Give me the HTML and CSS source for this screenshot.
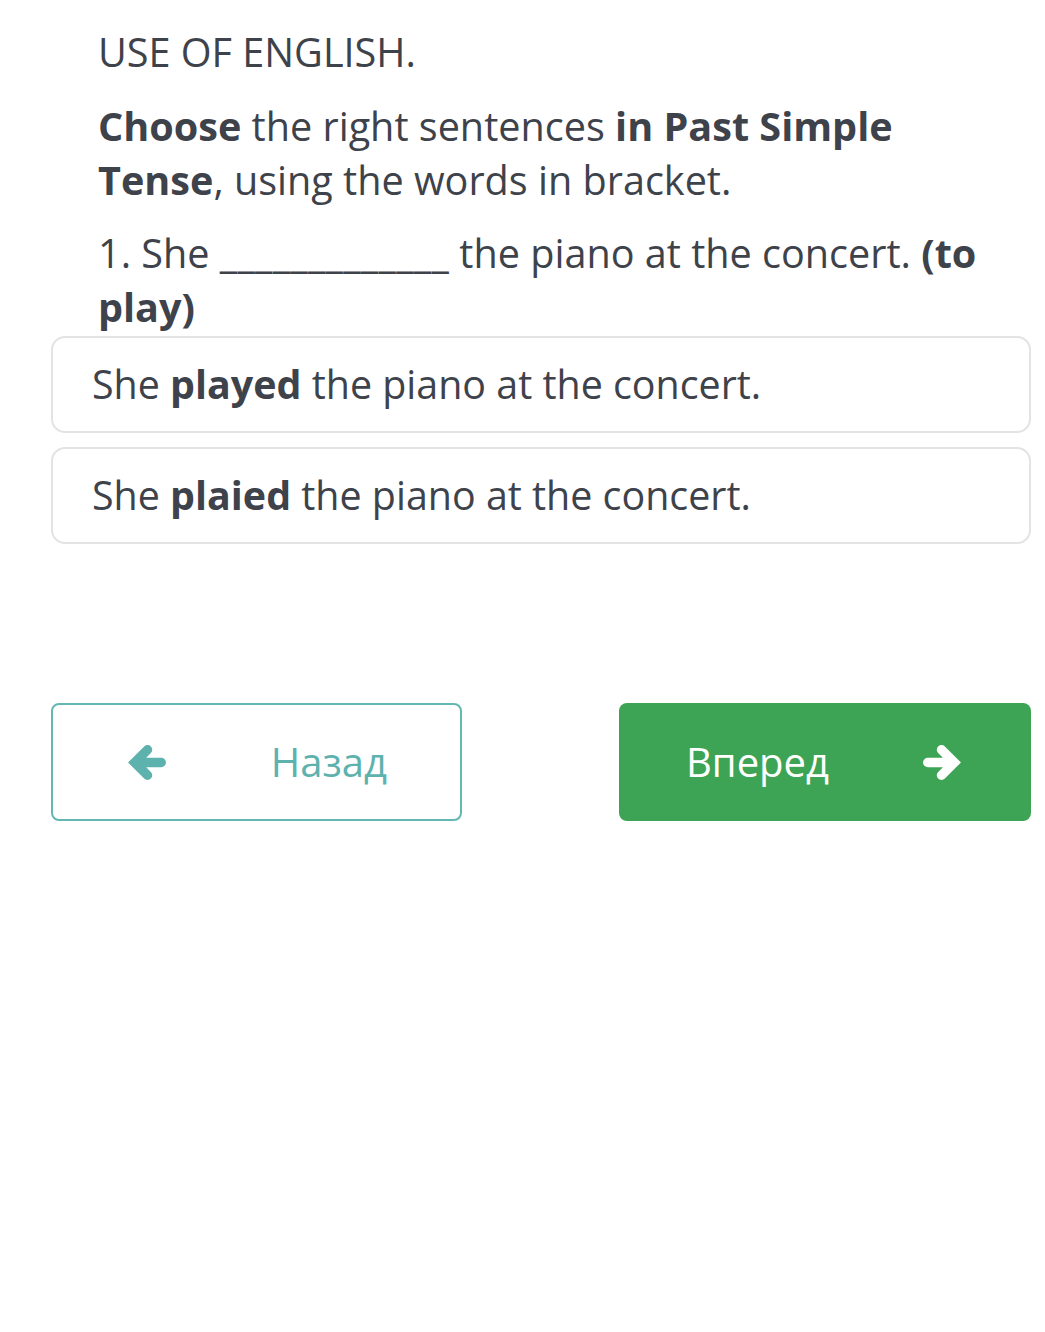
FILE: index.html
```html
<!DOCTYPE html>
<html lang="ru">
<head>
<meta charset="utf-8">
<link rel="stylesheet" href="styles.css">
</head>
<body>
<main class="page">
  <div class="text">
    <p class="title">USE OF ENGLISH.</p>
    <p class="task"><b>Choose</b> the right sentences <b>in Past Simple Tense</b>, using the words in bracket.</p>
    <p class="question">1. She <span class="blank">_____________</span> the piano at the concert. <b>(to play)</b></p>
  </div>
  <div class="options">
    <div class="option"><span>She <b>played</b> the piano at the concert.</span></div>
    <div class="option"><span>She <b>plaied</b> the piano at the concert.</span></div>
  </div>
  <div class="nav">
    <button class="btn btn-back">
      <svg class="arrow" viewBox="0 0 38 35" width="38" height="35"><path d="M33.25 17.5H7 M19.5 4.75L6.75 17.5 19.5 30.25" fill="none" stroke="currentColor" stroke-width="9.5" stroke-linecap="round" stroke-linejoin="miter"/></svg>
      <span>Назад</span>
    </button>
    <button class="btn btn-next">
      <span>Вперед</span>
      <svg class="arrow" viewBox="0 0 38 35" width="40" height="35"><path d="M4.75 17.5H31 M18.5 4.75L31.25 17.5 18.5 30.25" fill="none" stroke="currentColor" stroke-width="9.5" stroke-linecap="round" stroke-linejoin="miter"/></svg>
    </button>
  </div>
</main>
</body>
</html>
```
FILE: styles.css
```css
html, body {
  margin: 0;
  padding: 0;
  background: #ffffff;
}
body {
  font-family: "Open Sans", "Noto Sans", sans-serif;
  color: #3e424a;
  font-size: 39.6px;
  line-height: 54px;
}
.page {
  width: 980px;
  margin-left: 51px;
  padding-top: 25px;
}
.text {
  padding: 0 47px;
}
.text p {
  margin: 0;
}
.title {
  margin-bottom: 20px !important;
}
.task {
  margin-bottom: 19px !important;
}
.blank {
  letter-spacing: 0.3px;
}
b {
  font-weight: 700;
}
.options {
  margin-top: 2px;
  display: flex;
  flex-direction: column;
  gap: 14px;
}
.option {
  height: 97px;
  box-sizing: border-box;
  border: 2px solid #e3e3e3;
  border-radius: 14px;
  display: flex;
  align-items: center;
  padding-left: 39px;
  padding-bottom: 2px;
  font-size: 39.4px;
}
.nav {
  margin-top: 159px;
  display: flex;
  justify-content: space-between;
  align-items: center;
}
.btn {
  font-family: inherit;
  font-size: 40px;
  height: 118px;
  box-sizing: border-box;
  border-radius: 8px;
  display: flex;
  align-items: center;
  justify-content: space-between;
  cursor: pointer;
}
.btn span {
  padding-bottom: 2px;
}
.btn-back {
  width: 411px;
  background: #ffffff;
  border: 2px solid #63b8b4;
  color: #5db2ae;
  padding: 0 73px 0 75px;
}
.btn-next {
  width: 412px;
  background: #3ca454;
  border: none;
  color: #ffffff;
  padding: 0 69px 0 67px;
}
.arrow {
  display: block;
}
```
